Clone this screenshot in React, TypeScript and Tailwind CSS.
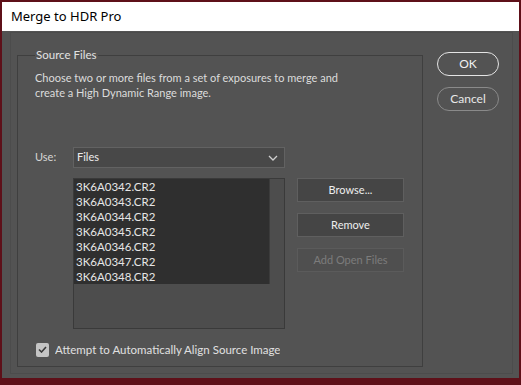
import { useState } from "react";

const files = [
    "3K6A0342.CR2",
    "3K6A0343.CR2",
    "3K6A0344.CR2",
    "3K6A0345.CR2",
    "3K6A0346.CR2",
    "3K6A0347.CR2",
    "3K6A0348.CR2",
];

const font = { fontFamily: 'Lato, "Segoe UI", sans-serif' };

const App = () => {
    const [align, setAlign] = useState(true);

    return (
        <div className="w-[521px] h-[385px] bg-[#5e1019] px-[2px] pt-[2px] pb-[7px] flex flex-col text-[11px] overflow-hidden" style={font}>
            <div className="h-[29px] bg-white flex items-center pl-[9px] text-[13px] text-black" style={{ fontFamily: '"Noto Sans", sans-serif' }}>
                Merge to HDR Pro
            </div>
            <div className="flex-1 bg-[#535353] pl-[8px] pr-[6px] pt-[1px] pb-[4px]">
                <div className="h-full border border-[#4c4c4c] flex">
                    {/* group box */}
                    <fieldset className="ml-[6px] mt-[14px] w-[406px] h-[320px] border border-[#3f3f3f] pl-[17px] pr-0 pt-0 pb-[10px] flex flex-col">
                        <legend className="px-[1px] text-[#e2e2e2] text-[11.5px] leading-[16px]">Source Files</legend>
                        <p className="text-[#dcdcdc] leading-[15px] mt-[7px]">
                            Choose two or more files from a set of exposures to merge and<br />
                            create a High Dynamic Range image.
                        </p>
                        <div className="mt-[47px] flex items-center">
                            <span className="w-[38px] text-[#d6d6d6]">Use:</span>
                            <div className="w-[212px] h-[21px] bg-[#484848] border border-[#626262] flex items-center justify-between pl-[3px] pr-[6px] text-[#ececec]">
                                <span>Files</span>
                                <svg width="10" height="6" viewBox="0 0 10 6" fill="none" stroke="#cfcfcf" strokeWidth="1.3">
                                    <path d="M1 1l4 4 4-4" />
                                </svg>
                            </div>
                        </div>
                        <div className="mt-[10px] flex gap-[12px]">
                            <div className="ml-[38px] w-[212px] h-[151px] border border-[#3a3a3a] bg-[#4d4d4d] flex items-start">
                                <div className="w-[196px] h-[105px] bg-[#2f2f2f] border-r border-[#3c3c3c]">
                                    {files.map((f) => (
                                        <div key={f} className="h-[15px] leading-[15px] pl-[2px] text-[11.5px] text-[#e6e6e6]">{f}</div>
                                    ))}
                                </div>
                            </div>
                            <div className="flex flex-col gap-[11px]">
                                <button className="w-[107px] h-[24px] bg-[#454545] border border-[#5f5f5f] text-[#eeeeee]">Browse...</button>
                                <button className="w-[107px] h-[24px] bg-[#454545] border border-[#5f5f5f] text-[#eeeeee]">Remove</button>
                                <button disabled className="w-[107px] h-[24px] bg-[#4f4f4f] border border-[#5b5b5b] text-[#7c7c7c]">Add Open Files</button>
                            </div>
                        </div>
                        <label className="mt-[12px] flex items-center gap-[6px] cursor-pointer">
                            <span
                                className="w-[13px] h-[14px] ml-[1px] bg-[#c4c4c4] rounded-[2px] flex items-center justify-center"
                                onClick={() => setAlign(!align)}
                            >
                                {align ? (
                                    <svg width="9" height="7" viewBox="0 0 9 7" fill="none" stroke="#3a3a3a" strokeWidth="1.6">
                                        <path d="M1 3.5l2.5 2.5L8 1" />
                                    </svg>
                                ) : null}
                            </span>
                            <span className="w-[225px] whitespace-nowrap overflow-hidden text-[11.5px] text-[#e0e0e0]">Attempt to Automatically Align Source Images</span>
                        </label>
                    </fieldset>
                    <div className="ml-[14px] mt-[19px] flex flex-col gap-[11px]">
                        <button className="w-[62px] h-[24px] rounded-full border-[1.5px] border-[#e4e4e4] text-[12px] text-[#f0f0f0]">OK</button>
                        <button className="w-[62px] h-[24px] rounded-full border border-[#8a8a8a] text-[12px] text-[#e8e8e8]">Cancel</button>
                    </div>
                </div>
            </div>
        </div>
    );
};

export default App;
